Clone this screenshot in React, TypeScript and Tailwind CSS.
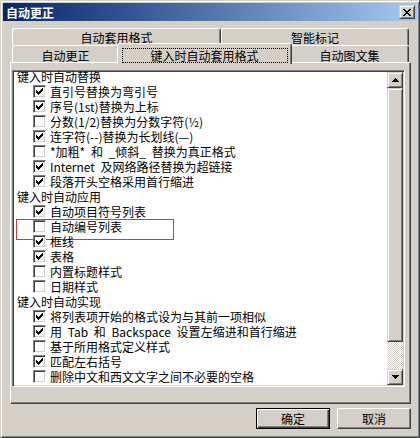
import React from 'react';

type Item = { text: string; checked: boolean; marked?: boolean };
type Group = { title: string; items: Item[] };

const groups: Group[] = [
  {
    title: '键入时自动替换',
    items: [
      { text: '直引号替换为弯引号', checked: true },
      { text: '序号(1st)替换为上标', checked: true },
      { text: '分数(1/2)替换为分数字符(½)', checked: false },
      { text: '连字符(--)替换为长划线(—)', checked: true },
      { text: '*加粗* 和 _倾斜_ 替换为真正格式', checked: false },
      { text: 'Internet 及网络路径替换为超链接', checked: true },
      { text: '段落开头空格采用首行缩进', checked: true },
    ],
  },
  {
    title: '键入时自动应用',
    items: [
      { text: '自动项目符号列表', checked: true },
      { text: '自动编号列表', checked: false, marked: true },
      { text: '框线', checked: true },
      { text: '表格', checked: true },
      { text: '内置标题样式', checked: false },
      { text: '日期样式', checked: false },
    ],
  },
  {
    title: '键入时自动实现',
    items: [
      { text: '将列表项开始的格式设为与其前一项相似', checked: true },
      { text: '用 Tab 和 Backspace 设置左缩进和首行缩进', checked: true },
      { text: '基于所用格式定义样式', checked: false },
      { text: '匹配左右括号', checked: true },
      { text: '删除中文和西文文字之间不必要的空格', checked: false },
    ],
  },
];

const raised =
  'border border-t-[#d4d0c8] border-l-[#d4d0c8] border-r-[#404040] border-b-[#404040] bg-[#d4d0c8] shadow-[inset_1px_1px_#fff,inset_-1px_-1px_#808080]';

const Check = () => (
  <svg width="7" height="7" viewBox="0 0 7 7" shapeRendering="crispEdges">
    {[2, 3, 4, 3, 2, 1, 0].map((y, x) => (
      <rect key={x} x={x} y={y} width="1" height="3" fill="#000" />
    ))}
  </svg>
);

const CheckBox = ({ checked }: { checked: boolean }) => (
  <div className="flex h-[13px] w-[13px] shrink-0 items-center justify-center border border-[#808080] border-r-white border-b-white bg-white shadow-[inset_1px_1px_#404040,inset_-1px_-1px_#d4d0c8]">
    {checked && <Check />}
  </div>
);

const Arrow = ({ up }: { up?: boolean }) => (
  <div className={`flex h-[16px] w-[16px] shrink-0 items-center justify-center ${raised}`}>
    <svg width="7" height="4" viewBox="0 0 7 4" shapeRendering="crispEdges">
      <path
        d={
          up
            ? 'M3 0h1v1h1v1h1v1h1v1H0V3h1V2h1V1h1z'
            : 'M0 0h7v1H6v1H5v1H4v1H3V3H2V2H1V1H0z'
        }
        fill="#000"
      />
    </svg>
  </div>
);

const CloseGlyph = () => {
  const rows = ['XX....XX', '.XX..XX.', '..XXXX..', '...XX...', '..XXXX..', '.XX..XX.', 'XX....XX'];
  return (
    <svg width="8" height="7" viewBox="0 0 8 7" shapeRendering="crispEdges">
      {rows.flatMap((r, y) =>
        r.split('').map((c, x) => (c === 'X' ? <rect key={`${x}-${y}`} x={x} y={y} width="1" height="1" fill="#000" /> : null))
      )}
    </svg>
  );
};

const Tab = ({ label, className = '' }: { label: string; className?: string }) => (
  <div
    className={`flex shrink-0 justify-center rounded-t-[3px] border-t border-l border-r border-t-white border-l-white border-r-[#404040] bg-[#d4d0c8] shadow-[inset_-1px_0_#808080] ${className}`}
  >
    {label}
  </div>
);

const Button = ({ label, isDefault }: { label: string; isDefault?: boolean }) => (
  <div
    className={`flex h-[21px] w-[74px] items-center justify-center bg-[#d4d0c8] ${
      isDefault
        ? 'border border-black shadow-[inset_1px_1px_#fff,inset_-1px_-1px_#404040,inset_-2px_-2px_#808080]'
        : 'border border-t-white border-l-white border-r-[#404040] border-b-[#404040] shadow-[inset_-1px_-1px_#808080]'
    }`}
  >
    {label}
  </div>
);

export default function App() {
  return (
    <div className="flex h-[438px] w-[420px] flex-col border border-t-[#d4d0c8] border-l-[#d4d0c8] border-r-[#404040] border-b-[#404040] bg-[#d4d0c8] p-[2px] font-['Noto_Sans_CJK_SC',sans-serif] text-[12px] leading-[15px] text-black shadow-[inset_1px_1px_#fff,inset_-1px_-1px_#808080]">
      {/* Title bar */}
      <div className="flex h-[18px] shrink-0 items-center justify-between bg-linear-to-r from-[#0a246a] to-[#a6caf0] pr-[2px] pl-[3px]">
        <span className="font-bold text-white">自动更正</span>
        <div className={`flex h-[14px] w-[16px] items-center justify-center ${raised}`}>
          <CloseGlyph />
        </div>
      </div>

      <div className="ml-[7px] w-[401px]">
        {/* Back row of tabs */}
        <div className="mt-[7px] flex h-[17px] pl-[2px]">
          <Tab label="自动套用格式" className="w-[209px] pt-[1px]" />
          <Tab label="智能标记" className="w-[188px] pt-[1px]" />
        </div>

        {/* Front row of tabs */}
        <div className="flex h-[17px] pl-[2px]">
          <Tab label="自动更正" className="w-[107px] pt-[2px]" />
          <div className="relative z-10 -mx-[2px] -mt-[2px] flex h-[21px] w-[175px] shrink-0 justify-center rounded-t-[3px] border-t border-l border-r border-t-white border-l-white border-r-[#404040] bg-[#d4d0c8] pt-[4px] shadow-[inset_-1px_0_#808080]">
            键入时自动套用格式
            <div className="absolute top-[4px] right-[3px] bottom-[1px] left-[4px] border border-dotted border-black" />
          </div>
          <Tab label="自动图文集" className="w-[119px] pt-[2px]" />
        </div>

        {/* Panel */}
        <div className="h-[342px] border border-t-white border-l-white border-r-[#404040] border-b-[#404040] pt-[7px] pl-[1px] shadow-[inset_-1px_-1px_#808080]">
          <div className="flex h-[317px] w-[393px] border border-[#808080] border-r-white border-b-white bg-white p-[1px] shadow-[inset_1px_1px_#404040,inset_-1px_-1px_#d4d0c8]">
            <div className="-mt-[3px] flex-1 overflow-hidden [word-spacing:3px]">
              {groups.map((g) => (
                <div key={g.title}>
                  <div className="h-[15px] overflow-hidden pl-[3px] whitespace-nowrap">{g.title}</div>
                  {g.items.map((it) => (
                    <div key={it.text} className="relative flex h-[15px] items-center gap-[4px] pl-[19px] whitespace-nowrap">
                      <CheckBox checked={it.checked} />
                      <span className="h-[15px] overflow-hidden">{it.text}</span>
                      {it.marked && (
                        <div className="absolute top-[0px] left-[2px] h-[21px] w-[158px] border border-[#c83c3c]" />
                      )}
                    </div>
                  ))}
                </div>
              ))}
            </div>

            {/* Scrollbar */}
            <div className="flex w-[16px] flex-col">
              <Arrow up />
              <div className={`h-[254px] shrink-0 ${raised}`} />
              <div className="flex-1 bg-[repeating-conic-gradient(#d4d0c8_0_25%,#fff_0_50%)] bg-[length:2px_2px]" />
              <Arrow />
            </div>
          </div>
        </div>
      </div>

      {/* Buttons */}
      <div className="mt-[4px] flex justify-end gap-[7px] pr-[6px]">
        <Button label="确定" isDefault />
        <Button label="取消" />
      </div>
    </div>
  );
}
